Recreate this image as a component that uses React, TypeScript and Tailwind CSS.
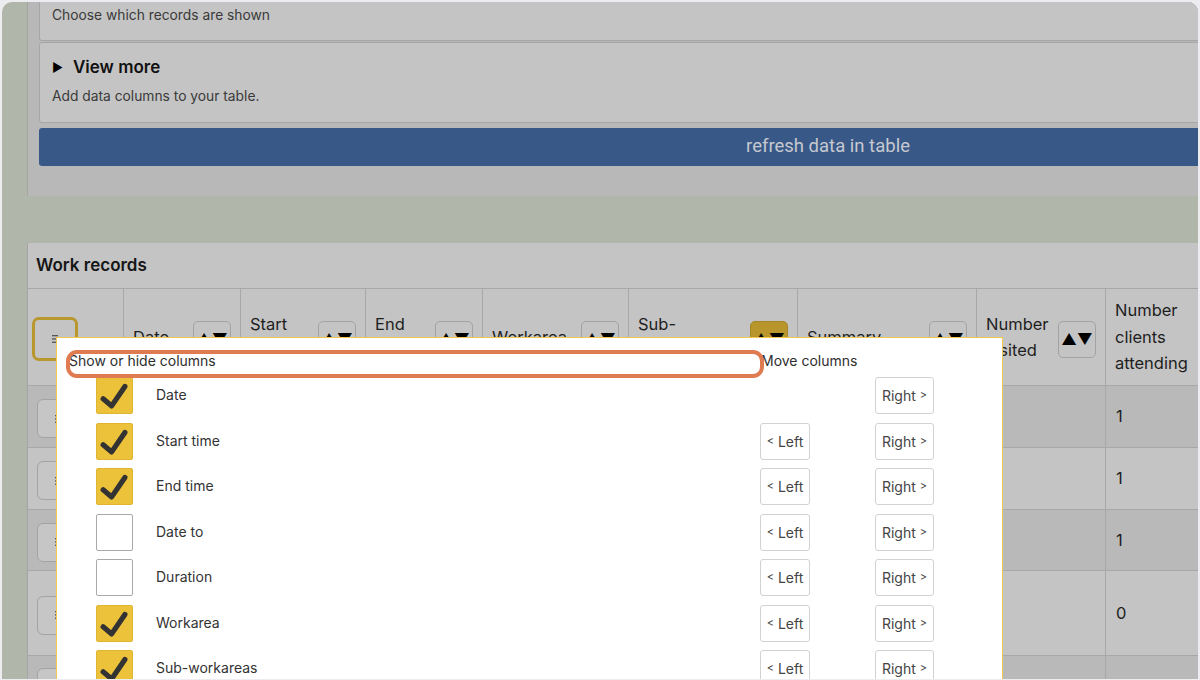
import React from "react";

const cols = "grid grid-cols-[95px_117px_125px_117px_146px_169px_179px_129px_300px]";

function SortBtn({ yellow = false }: { yellow?: boolean }) {
  return (
    <div
      className={
        "mt-[5px] w-[38px] h-[37px] shrink-0 rounded-[5px] border flex items-center justify-center text-[15.5px] leading-none text-black " +
        (yellow ? "bg-[#b8962c] border-[#a58626]" : "border-[#a3a3a3]")
      }
    >
      ▲▼
    </div>
  );
}

function MenuIcon() {
  return (
    <svg width="8" height="10" viewBox="0 0 8 10">
      <rect x="1" y="1" width="6" height="1.3" fill="#555" />
      <rect x="1" y="4.3" width="6" height="1.3" fill="#555" />
      <rect x="1" y="7.6" width="6" height="1.3" fill="#555" />
    </svg>
  );
}

function RowMenuBtn() {
  return (
    <div className="mt-[4px] ml-[9px] w-[42px] h-[39px] rounded-[6px] border border-[#a3a3a3] bg-[#c6c6c6] flex items-center justify-center">
      <MenuIcon />
    </div>
  );
}

function HeadCell({ children, yellow = false, btn = true }: { children: React.ReactNode; yellow?: boolean; btn?: boolean }) {
  return (
    <div className="border-l border-[#a8a8a8] pl-[9px] pr-[9px] flex items-center justify-between">
      <div className="text-[16.5px] leading-[26.5px] text-[#1e1e1e]">{children}</div>
      {btn && <SortBtn yellow={yellow} />}
    </div>
  );
}

function Check() {
  return (
    <div className="w-[37px] h-[37px] rounded-[2px] bg-[#ecc23a] border border-[#dfb532] flex items-center justify-center">
      <svg width="37" height="37" viewBox="0 0 37 37">
        <polyline points="6.5,22 15.5,29.5 29.5,9" fill="none" stroke="#333" strokeWidth="5.5" strokeLinecap="round" strokeLinejoin="round" />
      </svg>
    </div>
  );
}

function Empty() {
  return <div className="w-[37px] h-[37px] rounded-[2px] bg-white border border-[#a9a9a9]" />;
}

const items: { label: string; on: boolean; left: boolean }[] = [
  { label: "Date", on: true, left: false },
  { label: "Start time", on: true, left: true },
  { label: "End time", on: true, left: true },
  { label: "Date to", on: false, left: true },
  { label: "Duration", on: false, left: true },
  { label: "Workarea", on: true, left: true },
  { label: "Sub-workareas", on: true, left: true },
];

const rows = [
  { h: "h-[62px]", bg: "bg-[#b9b9b9]", v: "1" },
  { h: "h-[62px]", bg: "bg-[#c4c4c4]", v: "1" },
  { h: "h-[61px]", bg: "bg-[#b9b9b9]", v: "1" },
  { h: "h-[85px]", bg: "bg-[#c4c4c4]", v: "0" },
  { h: "h-[60px]", bg: "bg-[#b9b9b9]", v: "" },
];

export default function App() {
  return (
    <div className="w-[1200px] h-[680px] bg-[#ececf1] pt-[2px] px-[2px] pb-[1px] overflow-hidden font-['Inter',sans-serif]">
      <div className="relative h-full rounded-t-[10px] overflow-hidden bg-[#b1b6ab] flex">
        <div className="w-[25px] shrink-0" />
        <div className="w-[1601px] shrink-0 flex flex-col">
          {/* top filter panel */}
          <div className="h-[194px] shrink-0 bg-[#b8b8b8] border-l border-[#a3a69f] pl-[11px] pr-[11px] flex flex-col">
            <div className="h-[39px] bg-[#c4c4c4] border-l border-b border-r border-[#a6a6a6] rounded-b-[3px] pl-[12px] pt-[5px]">
              <div className="text-[13.8px] leading-[16px] text-[#3a3a3a]">Choose which records are shown</div>
            </div>
            <div className="mt-[1px] h-[81px] bg-[#c4c4c4] border border-[#a6a6a6] rounded-[3px] pl-[12px] pt-[15px]">
              <div className="flex items-center h-[20px]">
                <span className="text-[12px] text-black w-[21px]">▶</span>
                <span className="text-[17px] font-semibold text-[#111]">View more</span>
              </div>
              <div className="mt-[9px] text-[13.8px] leading-[18px] text-[#3a3a3a]">Add data columns to your table.</div>
            </div>
            <div className="mt-[5px] h-[38px] rounded-[3px] bg-[#385888] flex items-center justify-center">
              <span className="font-['Roboto',sans-serif] text-[18.5px] text-[#c6c9cf]">refresh data in table</span>
            </div>
          </div>
          <div className="h-[47px] shrink-0" />
          {/* work records panel */}
          <div className="flex-1 bg-[#c4c4c4] border-l border-[#a5a5a5]">
            <div className="h-[46px] border-b border-[#a8a8a8] flex items-center pl-[8px]">
              <span className="text-[17px] font-semibold text-[#161616]">Work records</span>
            </div>
            <div className={cols + " h-[97px] border-b border-[#a8a8a8]"}>
              <div className="flex items-center pl-[4px]">
                <div className="mt-[4px] w-[46px] h-[44px] rounded-[7px] border-[3px] border-[#b8982d] flex items-center justify-center">
                  <MenuIcon />
                </div>
              </div>
              <HeadCell>Date</HeadCell>
              <HeadCell>Start<br />time</HeadCell>
              <HeadCell>End<br />time</HeadCell>
              <HeadCell>Workarea</HeadCell>
              <HeadCell yellow>Sub-<br />workareas</HeadCell>
              <HeadCell>Summary</HeadCell>
              <HeadCell>Number<br />visited</HeadCell>
              <HeadCell btn={false}>Number<br />clients<br />attending</HeadCell>
            </div>
            {rows.map((r, i) => (
              <div key={i} className={cols + " border-b border-[#a8a8a8] " + r.h + " " + r.bg}>
                <div className="flex items-center">
                  <RowMenuBtn />
                </div>
                {[0, 1, 2, 3, 4, 5, 6].map((c) => (
                  <div key={c} className="border-l border-[#a8a8a8]" />
                ))}
                <div className="border-l border-[#a8a8a8] pl-[10px] flex items-center text-[16.5px] text-[#1e1e1e]">{r.v}</div>
              </div>
            ))}
          </div>
        </div>

        {/* popup */}
        <div className="absolute left-[54px] top-[335px] w-[947px] h-[400px] bg-white border border-[#f1c94f]">
          <div className="grid grid-cols-[703px_115px_1fr] h-[39px]">
            <div className="pl-[12px] pt-[15px] text-[14px] leading-[16px] text-[#2e2e2e]">Show or hide columns</div>
            <div className="col-span-2 pl-[1px] pt-[15px] text-[14px] leading-[16px] text-[#2e2e2e] whitespace-nowrap">Move columns</div>
          </div>
          {items.map((it) => (
            <div key={it.label} className="grid grid-cols-[703px_115px_1fr] h-[45.5px]">
              <div className="pl-[39px] flex items-start">
                <div className="flex items-center h-[37px]">
                  {it.on ? <Check /> : <Empty />}
                  <span className="ml-[23px] mb-[2px] text-[14px] text-[#333]">{it.label}</span>
                </div>
              </div>
              <div>
                {it.left && (
                  <div className="w-[50px] h-[37px] rounded-[3px] border border-[#d2d2d2] flex items-center justify-center text-[14px] text-[#444] whitespace-nowrap">
                    <span className="text-[11px] mr-[4px]">&lt;</span>Left
                  </div>
                )}
              </div>
              <div>
                <div className="w-[59px] h-[37px] rounded-[3px] border border-[#d2d2d2] flex items-center justify-center text-[14px] text-[#444] whitespace-nowrap">
                  Right<span className="text-[11px] ml-[4px]">&gt;</span>
                </div>
              </div>
            </div>
          ))}
          {/* annotation highlight */}
          <div className="absolute left-[9px] top-[12px] w-[698px] h-[28px] rounded-[11px] border-[4px] border-[#e07a50]" />
        </div>
      </div>
    </div>
  );
}
